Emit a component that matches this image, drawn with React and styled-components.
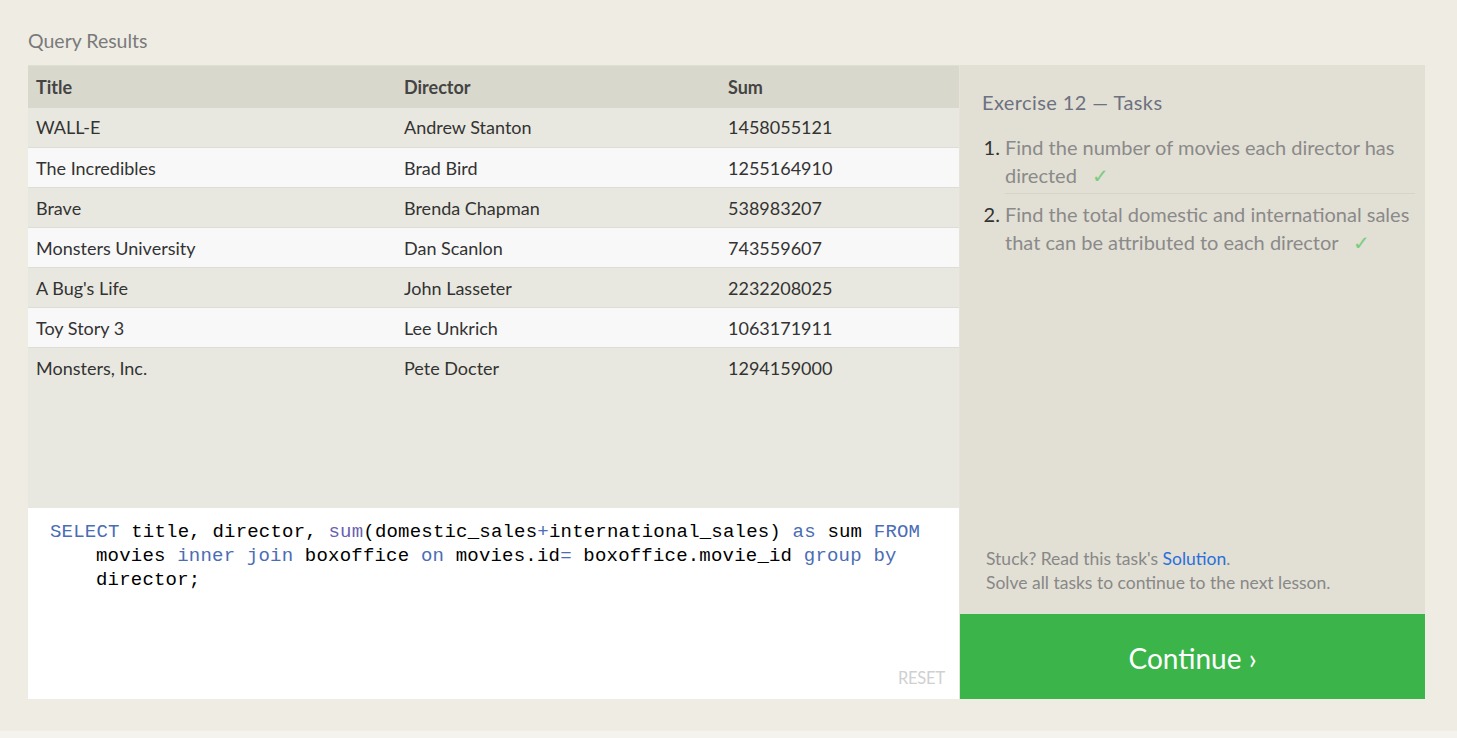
import React from 'react';
import styled, { createGlobalStyle } from 'styled-components';

const GlobalStyle = createGlobalStyle`
    html, body {
        margin: 0;
        background: #f5f3ee;
    }
    * {
        box-sizing: border-box;
    }
`;

const rows = [
    ['WALL-E', 'Andrew Stanton', '1458055121'],
    ['The Incredibles', 'Brad Bird', '1255164910'],
    ['Brave', 'Brenda Chapman', '538983207'],
    ['Monsters University', 'Dan Scanlon', '743559607'],
    ["A Bug's Life", 'John Lasseter', '2232208025'],
    ['Toy Story 3', 'Lee Unkrich', '1063171911'],
    ['Monsters, Inc.', 'Pete Docter', '1294159000'],
];

export default function App() {
    return (
        <Page>
            <GlobalStyle />
            <Heading>Query Results</Heading>
            <Panels>
                <Left>
                    <Results>
                        <Table>
                            <thead>
                                <tr>
                                    <Th $w={368}>Title</Th>
                                    <Th $w={324}>Director</Th>
                                    <Th>Sum</Th>
                                </tr>
                            </thead>
                            <tbody>
                                {rows.map((r, i) => (
                                    <Row key={r[0]} $even={i % 2 === 1}>
                                        {r.map((c) => (
                                            <Td key={c}>{c}</Td>
                                        ))}
                                    </Row>
                                ))}
                            </tbody>
                        </Table>
                    </Results>
                    <Editor>
                        <Code>
                            <Kw>SELECT</Kw> title, director, <Fn>sum</Fn>(domestic_sales<Kw>+</Kw>international_sales) <Kw>as</Kw> sum <Kw>FROM</Kw> movies <Kw>inner</Kw> <Kw>join</Kw> boxoffice <Kw>on</Kw> movies.id<Kw>=</Kw> boxoffice.movie_id <Kw>group</Kw> <Kw>by</Kw> director;
                        </Code>
                        <Reset>RESET</Reset>
                    </Editor>
                </Left>
                <Right>
                    <Tasks>
                        <TasksTitle>Exercise 12 — Tasks</TasksTitle>
                        <TaskList>
                            <Task>
                                Find the number of movies each director has directed <Check>✓</Check>
                            </Task>
                            <Task>
                                Find the total domestic and international sales that can be attributed to each director <Check>✓</Check>
                            </Task>
                        </TaskList>
                        <Hint>
                            Stuck? Read this task's <SolutionLink>Solution</SolutionLink>.
                            <br />
                            Solve all tasks to continue to the next lesson.
                        </Hint>
                    </Tasks>
                    <ContinueBtn>Continue ›</ContinueBtn>
                </Right>
            </Panels>
        </Page>
    );
}

const Page = styled.div`
    background: #efece4;
    padding: 28px 31px 32px 28px;
    font-family: Lato, "Noto Sans", sans-serif;
`;

const Heading = styled.h2`
    margin: 0 0 11px;
    font-size: 19.5px;
    font-weight: 400;
    color: #7a7a7a;
    line-height: 26px;
`;

const Panels = styled.div`
    display: flex;
    height: 634px;
`;

const Left = styled.div`
    width: 932px;
    display: flex;
    flex-direction: column;
    border-right: 1px solid #e6e4da;
`;

const Results = styled.div`
    flex: 1;
    background: #e9e8e0;
`;

const Table = styled.table`
    width: 100%;
    border-collapse: collapse;
    font-size: 18px;
    color: #333;
`;

const Th = styled.th`
    width: ${(p) => (p.$w ? `${p.$w}px` : 'auto')};
    height: 42px;
    padding: 0 8px;
    text-align: left;
    font-weight: 700;
    color: #444;
    background: #d9d8cc;
    border-top: 1px solid #e1dfd5;
`;

const Row = styled.tr`
    background: ${(p) => (p.$even ? '#f8f8f8' : '#e9e8e0')};
    border-bottom: 1px solid #dcdcd8;

    &:last-child {
        border-bottom: none;
    }
`;

const Td = styled.td`
    height: 40px;
    padding: 0 8px;
`;

const Editor = styled.div`
    height: 191px;
    background: #fff;
    position: relative;
    padding: 12px 8px 0 22px;
`;

const Code = styled.div`
    font-family: "Liberation Mono", "DejaVu Sans Mono", monospace;
    font-size: 19px;
    letter-spacing: 0.2px;
    line-height: 24px;
    color: #000;
    padding-left: 46px;
    text-indent: -46px;
`;

const Kw = styled.span`
    color: #4a6db5;
`;

const Fn = styled.span`
    color: #6a5fb0;
`;

const Reset = styled.div`
    position: absolute;
    right: 14px;
    bottom: 11px;
    font-size: 16.5px;
    color: #d0d0d0;
    letter-spacing: -0.2px;
`;

const Right = styled.div`
    width: 465px;
    display: flex;
    flex-direction: column;
`;

const Tasks = styled.div`
    flex: 1;
    background: #e2dfd4;
    padding: 25px 10px 0 22px;
    display: flex;
    flex-direction: column;
`;

const TasksTitle = styled.h3`
    margin: 0 0 15px;
    font-size: 20px;
    letter-spacing: 0.4px;
    font-weight: 400;
    color: #6d7181;
`;

const TaskList = styled.ol`
    margin: 0;
    padding-left: 23px;
    font-size: 20px;
    line-height: 28px;
    flex: 1;
`;

const Task = styled.li`
    color: #8a8a8a;
    padding: 4px 0;
    border-bottom: 1px solid #d6d3c8;

    &:last-child {
        border-bottom: none;
        padding-top: 6px;
    }

    &::marker {
        color: #333;
    }
`;

const Check = styled.span`
    color: #7ccc80;
    margin-left: 10px;
`;

const Hint = styled.p`
    margin: 0 0 19px 4px;
    font-size: 17.5px;
    line-height: 24px;
    color: #888;
`;

const SolutionLink = styled.a`
    color: #2a6fdb;
    text-decoration: none;
`;

const ContinueBtn = styled.button`
    height: 85px;
    border: none;
    padding-top: 4px;
    background: #3bb54a;
    color: #fff;
    font-family: inherit;
    font-size: 28px;
    cursor: pointer;
`;
